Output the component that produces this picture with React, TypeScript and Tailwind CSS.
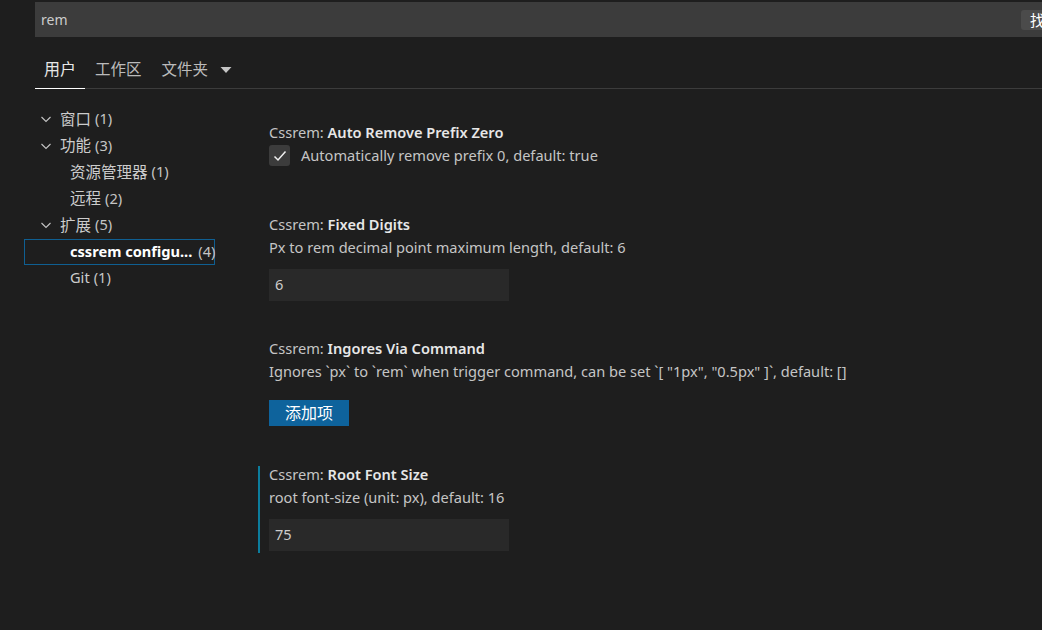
import type { ReactNode } from "react";

function Chevron() {
  return (
    <svg width="12" height="12" viewBox="0 0 12 12" className="shrink-0">
      <polyline points="1.5,4 6,8.5 10.5,4" fill="none" stroke="#c5c5c5" strokeWidth="1.1" />
    </svg>
  );
}

// CJK glyphs render a bit larger than the latin text in the reference
function Cjk({ children }: { children: ReactNode }) {
  return <span className="text-[15.5px]">{children}</span>;
}

function TreeRow({
  label,
  count,
  open,
  child,
  selected,
  cjk,
}: {
  label: string;
  count: number;
  open?: boolean;
  child?: boolean;
  selected?: boolean;
  cjk?: boolean;
}) {
  return (
    <div
      className={`h-[26.5px] flex items-center border whitespace-nowrap ${
        selected ? "border-[#0f5f92]" : "border-transparent"
      } ${child ? "pl-[45px]" : "pl-[15px]"}`}
    >
      {open && (
        <span className="mr-[8px] flex">
          <Chevron />
        </span>
      )}
      <span className={selected ? "font-bold text-white" : "text-[#cccccc]"}>
        {cjk ? <Cjk>{label}</Cjk> : label}
      </span>
      <span className={`${selected ? "ml-[6px]" : "ml-[4px]"} text-[#c5c5c5]`}>({count})</span>
    </div>
  );
}

function Setting({
  name,
  desc,
  children,
  modified,
  className,
}: {
  name: string;
  desc?: string;
  children: ReactNode;
  modified?: boolean;
  className?: string;
}) {
  return (
    <div
      className={`border-l-2 pl-[9px] pb-[2px] ${
        modified ? "border-[#0c7d9d]" : "border-transparent"
      } ${className ?? ""}`}
    >
      <div className="leading-[17px] whitespace-nowrap">
        <span className="text-[#c5c5c5]">Cssrem: </span>
        <span className="font-semibold text-[#e7e7e7]">{name}</span>
      </div>
      {desc && <div className="mt-[6px] leading-[17px] text-[#c5c5c5] whitespace-nowrap">{desc}</div>}
      {children}
    </div>
  );
}

export default function App() {
  return (
    <div
      className="w-[1042px] h-[630px] overflow-hidden bg-[#1e1e1e] text-[14.6px] text-[#cccccc]"
      style={{ fontFamily: '"Noto Sans", "Noto Sans CJK SC", sans-serif' }}
    >
      {/* search */}
      <div className="pt-[2px] pl-[35px]">
        <div className="h-[35px] bg-[#3c3c3c] flex items-center overflow-hidden">
          <div className="w-[986px] shrink-0 pl-[6px] text-[14px] text-[#cccccc]">rem</div>
          <div className="shrink-0 h-[20px] pl-[9px] pr-[8px] rounded-[3px] bg-[#4b4b4b] text-white text-[15px] leading-[20px] whitespace-nowrap">
            找到 4 个设置
          </div>
        </div>
      </div>

      {/* tabs */}
      <div className="mt-[13px] ml-[35px] h-[39px] flex border-b border-[#3c3c3c]">
        <div className="h-[39px] px-[9px] flex items-center border-b border-white -mb-px text-[#e7e7e7] text-[16px]">用户</div>
        <div className="h-[39px] px-[10px] flex items-center text-[#bbbbbb] text-[15.5px]">工作区</div>
        <div className="h-[39px] px-[10px] flex items-center text-[#bbbbbb] text-[15.5px]">
          文件夹
          <svg width="12" height="8" viewBox="0 0 12 8" className="ml-[12px]">
            <polygon points="0.5,1 11.5,1 6,7" fill="#c5c5c5" />
          </svg>
        </div>
      </div>

      <div className="flex">
        {/* tree */}
        <div className="ml-[24px] w-[191px] mt-[17px] shrink-0">
          <TreeRow label="窗口" count={1} open cjk />
          <TreeRow label="功能" count={3} open cjk />
          <TreeRow label="资源管理器" count={1} child cjk />
          <TreeRow label="远程" count={2} child cjk />
          <TreeRow label="扩展" count={5} open cjk />
          <TreeRow label="cssrem configu..." count={4} child selected />
          <TreeRow label="Git" count={1} child />
        </div>

        {/* settings */}
        <div className="ml-[43px] mt-[35px] flex flex-col">
          <Setting name="Auto Remove Prefix Zero" className="mb-[48px]">
            <div className="mt-[4px] h-[21px] leading-[21px] flex items-center">
              <div className="w-[21px] h-[21px] rounded-[3px] bg-[#3c3c3c] flex items-center justify-center">
                <svg width="16" height="16" viewBox="0 0 16 16">
                  <polyline points="2.5,8.5 6,12 13.5,3.5" fill="none" stroke="#f0f0f0" strokeWidth="1.5" />
                </svg>
              </div>
              <span className="ml-[11px] text-[#c5c5c5] whitespace-nowrap">
                Automatically remove prefix 0, default: true
              </span>
            </div>
          </Setting>

          <Setting
            name="Fixed Digits"
            desc="Px to rem decimal point maximum length, default: 6"
            className="mb-[37px]"
          >
            <div className="mt-[13px] w-[240px] h-[32px] bg-[#292929] flex items-center pl-[6px] text-[#cccccc]">6</div>
          </Setting>

          <Setting
            name="Ingores Via Command"
            desc={'Ignores `px` to `rem` when trigger command, can be set `[ "1px", "0.5px" ]`, default: []'}
            className="mb-[38px]"
          >
            <div className="mt-[20px] w-[80px] h-[26px] bg-[#0e639c] text-white text-[16px] flex items-center justify-center">
              添加项
            </div>
          </Setting>

          <Setting name="Root Font Size" desc="root font-size (unit: px), default: 16" modified>
            <div className="mt-[13px] w-[240px] h-[32px] bg-[#292929] flex items-center pl-[6px] text-[#cccccc]">75</div>
          </Setting>
        </div>
      </div>
    </div>
  );
}
